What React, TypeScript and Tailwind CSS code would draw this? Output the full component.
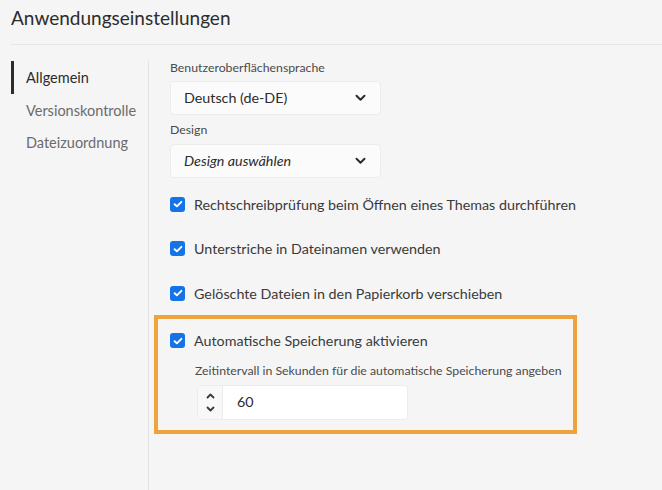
import React from "react";

const font = { fontFamily: "Lato, 'Noto Sans', sans-serif" };

function Chevron() {
  return (
    <svg width="11" height="8" viewBox="0 0 11 8" className="text-[#2c2c2c]">
      <path d="M1.5 1.8 L5.5 5.8 L9.5 1.8" fill="none" stroke="currentColor" strokeWidth="2" strokeLinecap="round" strokeLinejoin="round" />
    </svg>
  );
}

function Check() {
  return (
    <span className="w-[15px] h-[15px] rounded-[3px] bg-[#1473e6] flex items-center justify-center shrink-0">
      <svg width="10" height="8" viewBox="0 0 10 8">
        <path d="M1.6 4.2 L3.9 6.3 L8.4 1.8" fill="none" stroke="white" strokeWidth="1.9" strokeLinecap="round" strokeLinejoin="round" />
      </svg>
    </span>
  );
}

function Select({ value, italic }: { value: string; italic?: boolean }) {
  return (
    <div className="w-[211px] h-[34px] bg-[#fbfbfb] border border-[#ececec] rounded-[4px] flex items-center justify-between pl-[13px] pr-[14px]">
      <span className={`text-[14.3px] text-[#2c2c2c] ${italic ? "italic" : ""}`}>{value}</span>
      <Chevron />
    </div>
  );
}

function CheckRow({ label }: { label: string }) {
  return (
    <div className="flex items-center gap-[9px] h-[44.5px]">
      <Check />
      <span className="text-[14.3px] text-[#3a3a3a]">{label}</span>
    </div>
  );
}

export default function App() {
  return (
    <div style={font} className="w-[662px] h-[490px] bg-[#f5f5f5] overflow-hidden flex flex-col">
      <div className="ml-[11px] h-[45px] border-b border-[#e6e6e6] pt-[5px]">
        <h1 className="text-[19px] text-[#2c2c2c] leading-[26px]">Anwendungseinstellungen</h1>
      </div>
      <div className="flex flex-1">
        <div className="w-[149px] pl-[11px] pt-[16px] shrink-0">
          <div className="h-full border-r border-[#e3e3e3]">
            <div className="flex flex-col">
              <div className="h-[33px] border-l-[3px] border-[#2c2c2c] pl-[12px] flex items-center text-[14.5px] text-[#2c2c2c]">Allgemein</div>
              <div className="h-[33px] pl-[15px] flex items-center text-[14.5px] text-[#6b6b6b]">Versionskontrolle</div>
              <div className="h-[31px] pl-[15px] flex items-center text-[14.5px] text-[#6b6b6b]">Dateizuordnung</div>
            </div>
          </div>
        </div>
        <div className="flex-1 pt-[15px] flex flex-col">
          <div className="pl-[21px]">
            <div className="text-[12.3px] text-[#4b4b4b] h-[21px] leading-[16px]">Benutzeroberflächensprache</div>
            <Select value="Deutsch (de-DE)" />
            <div className="text-[12.3px] text-[#4b4b4b] h-[29px] pt-[7px] leading-[16px]">Design</div>
            <Select value="Design auswählen" italic />
            <div className="pt-[4px]">
              <CheckRow label="Rechtschreibprüfung beim Öffnen eines Themas durchführen" />
              <CheckRow label="Unterstriche in Dateinamen verwenden" />
              <CheckRow label="Gelöschte Dateien in den Papierkorb verschieben" />
            </div>
          </div>
          <div className="ml-[5px] w-[423px] border-[4px] border-[#f0a23e] mt-[-1px] pl-[12px] pt-[10px] pb-[10px]">
            <div className="flex items-center gap-[9px] h-[24px]">
              <Check />
              <span className="text-[14.3px] text-[#3a3a3a]">Automatische Speicherung aktivieren</span>
            </div>
            <div className="pl-[25px] pt-[10px] text-[12.3px] text-[#4b4b4b] leading-[16px]">Zeitintervall in Sekunden für die automatische Speicherung angeben</div>
            <div className="ml-[27px] mt-[6px] w-[211px] h-[35px] border border-[#ececec] rounded-[4px] flex overflow-hidden">
              <div className="w-[25px] bg-[#f8f8f8] border-r border-[#ececec] flex flex-col items-center justify-center gap-[7px]">
                <svg width="9" height="6" viewBox="0 0 9 6"><path d="M1.5 4.5 L4.5 1.5 L7.5 4.5" fill="none" stroke="#3a3a3a" strokeWidth="1.8" strokeLinecap="round" strokeLinejoin="round" /></svg>
                <svg width="9" height="6" viewBox="0 0 9 6"><path d="M1.5 1.5 L4.5 4.5 L7.5 1.5" fill="none" stroke="#3a3a3a" strokeWidth="1.8" strokeLinecap="round" strokeLinejoin="round" /></svg>
              </div>
              <div className="flex-1 bg-white flex items-center pl-[14px] text-[14.3px] text-[#2c2c2c]">60</div>
            </div>
          </div>
        </div>
      </div>
    </div>
  );
}
